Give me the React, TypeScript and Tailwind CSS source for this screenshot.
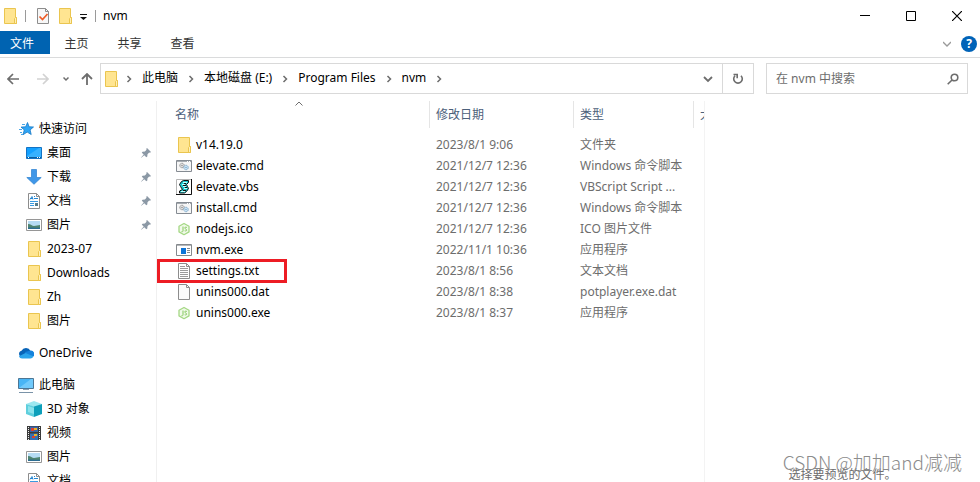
import type { ReactNode } from "react";

const icons: Record<string, ReactNode> = {
  folder: (
    <>
      <path d="M2.500.5h11v9h1v6h-12z" fill="#ffe591" stroke="#eac54f" />
      <path d="M12.500 15.500v-5l1-1h1v6z" fill="#fff0b8" stroke="#eac54f" />
    </>
  ),
  star: (
    <>
      <path
        d="M9.500 1.500l1.600 4.300 4.400.2-3.400 2.900 1.100 4.600-4-2.400-4.200 2.600 1.300-4.800L3 6.100l4.700-.3z"
        fill="#2fa5f5"
        stroke="#1878c4"
        strokeWidth=".8"
      />
      <path d="M4 3.500h3M1 8.500h3M2 11.500h2M3 13.500h2" stroke="#4aa7e8" />
    </>
  ),
  desktop: (
    <>
      <path d="M.5 2.500h15v11H.5z" fill="#12a0ff" stroke="#1373c4" />
      <path d="M1 11L13 3h2v9H1z" fill="#36b1ff" />
      <path d="M1 12.500h14" stroke="#0b5d9e" />
      <path d="M2 12.500h1M11 12.500h1M13 12.500h1" stroke="#fff" />
    </>
  ),
  download: (
    <path
      d="M5.500.5h5v8h4.700L8 15.300.8 8.500h4.700z"
      fill="#3f97e8"
      stroke="#2a7fd0"
      strokeWidth=".7"
    />
  ),
  document: (
    <>
      <path d="M2.500.5h8l3 3v12h-11z" fill="#fff" stroke="#8d8d8d" />
      <path d="M10.500.5v3h3" fill="none" stroke="#8d8d8d" />
      <path d="M4 6.500l2-3 1 3M4 5.500h3M8 3.500h1M8 5.500h4" stroke="#2787d2" fill="none" />
      <path d="M4 8.500h8M4 10.500h4M4 12.500h4" stroke="#3a9ae0" />
      <path d="M9 10h3v3H9z" fill="#557d8c" />
    </>
  ),
  picture: (
    <>
      <path d="M.5 2.500h15v11H.5z" fill="#fff" stroke="#969696" />
      <path d="M2 4h12v8H2z" fill="#b6dcf4" />
      <path d="M2 7c3 0 4 2 6 2s4-1 6-1v4H2z" fill="#4f8470" />
      <path d="M2 10.500c4 0 7 .5 12 0V12H2z" fill="#2c6d91" />
    </>
  ),
  cloud: (
    <>
      <path d="M4 12.500a3.500 3.500 0 0 1-.5-6.800A5 5 0 0 1 12.500 6L9 12.500z" fill="#0864b8" />
      <path d="M7 7l5.500-1.500a3.500 3.500 0 0 1 2.800 6L9 12z" fill="#1482dc" />
      <path d="M1 11.300L7.500 8l7.800 3.300c-.5 1.400-1.500 2.200-3 2.200H4c-1.400 0-2.500-.8-3-2.200z" fill="#2aa4ec" />
    </>
  ),
  computer: (
    <>
      <path d="M.5 1.500h15v10H.5z" fill="#48b5f5" stroke="#4d7694" />
      <path d="M1 11L13 2h2v9z" fill="#71cafb" />
      <path d="M5 12.500h6" stroke="#8aa0b2" />
      <path d="M1 15.500h14" stroke="#7a93a8" />
    </>
  ),
  cube: (
    <>
      <path d="M8 0l8 3-8 3-8-3z" fill="#9ce8f0" />
      <path d="M0 3l8 2.500V16l-8-3z" fill="#5fcfdd" />
      <path d="M16 3L8 5.500V16l8-3z" fill="#0d9fba" />
      <path d="M2 5l6 2v6l-6-2z" fill="#8be3ec" />
    </>
  ),
  film: (
    <>
      <path d="M1 1h14v14H1z" fill="#3a3a3a" />
      <path d="M4 1.500h8V7H4z" fill="#3b65a8" />
      <path d="M4 8.500h8V15H4z" fill="#3470b4" />
      <path d="M5 3h3v3H5zM6 11h3v2H6z" fill="#d9412f" />
      <path d="M8 3h3v2H8zM8 9h3v2H8z" fill="#e6b22b" />
      <path d="M2.500 2v13M13.500 2v13" stroke="#eee" strokeDasharray="1 1" />
    </>
  ),
  cmd: (
    <>
      <path d="M.5 2.500h15v11H.5z" fill="#f6f6f6" stroke="#858b92" />
      <path d="M1 3.500h14" stroke="#a6abb0" />
      <path d="M11 3.500h1M13 3.500h1" stroke="#fff" />
      <circle cx="6" cy="7.500" r="2.200" fill="#e4e4e4" stroke="#909090" strokeDasharray="1.500 .3" />
      <circle cx="6" cy="7.500" r=".8" fill="#909090" />
      <circle cx="10" cy="9.500" r="2.200" fill="#cfe7f8" stroke="#7ea9c8" strokeDasharray="1.500 .3" />
      <circle cx="10" cy="9.500" r=".8" fill="#7ea9c8" />
    </>
  ),
  vbs: (
    <>
      <path d="M.5.5h15v15H.5z" fill="#fff" stroke="#b5b5b5" />
      <path d="M15.500 0v15.500H0" fill="none" stroke="#111" />
      <path d="M5.500 2.500l2-1h5v2l-2 2 1 2 1 2-2 3-2 1.500h-5v-2l3-1.500-2-3-1-2z" fill="#19c6cc" stroke="#111" />
      <path d="M7 3.500h4M6 5.500h3M7 7.500h3M8 9.500h3M5 12.500h4" stroke="#c9ffff" />
      <path d="M10 4.500H8M7 6.500h3M9 8.500h2M7 11.500h3" stroke="#111" />
    </>
  ),
  node: (
    <>
      <path
        d="M8 2.500l5 2.800v5.600l-5 2.800-5-2.800V5.300z"
        fill="#f1faea"
        stroke="#a5d885"
        strokeWidth="1.300"
        strokeLinejoin="round"
      />
      <path
        d="M7 5.500v4.300c0 .8-.6 1.200-1.500.9M10.900 6.500c-1.800-1-3 .6-1.500 1.300 1.800.6 1.800 2.600-.7 2"
        fill="none"
        stroke="#85c95e"
      />
    </>
  ),
  exe: (
    <>
      <path d="M.5 2.500h15v11H.5z" fill="#fff" stroke="#85898d" />
      <path d="M1 3.500h14" stroke="#b4b7ba" />
      <path d="M5 6h5v6H5z" fill="#0d74d8" />
      <path d="M11 6.500h3M11 8.500h3M11 10.500h3" stroke="#85898d" />
    </>
  ),
  text: (
    <>
      <path d="M2.500.5h8l3 3v12h-11z" fill="#fff" stroke="#8d8d8d" />
      <path d="M10.500.5v3h3" fill="none" stroke="#8d8d8d" />
      <path d="M4 3.500h5M4 5.500h8M4 7.500h8M4 9.500h8M4 11.500h8M4 13.500h8" stroke="#9b9b9b" />
    </>
  ),
  blank: (
    <>
      <path d="M2.500.5h8l3 3v12h-11z" fill="#fafafa" stroke="#8d8d8d" />
      <path d="M10.500.5v3h3" fill="none" stroke="#8d8d8d" />
    </>
  ),
  check: (
    <>
      <path d="M2.500.5h8l3 3v12h-11z" fill="#f7f7f7" stroke="#8d8d8d" />
      <path d="M10.500.5v3h3" fill="none" stroke="#8d8d8d" />
      <path d="M4.500 8.500l3 3 5-5.500" fill="none" stroke="#ef5b25" strokeWidth="1.700" />
    </>
  ),
};

const Icon = ({ name }: { name: string }) => (
  <svg viewBox="0 0 16 16" className="size-4 shrink-0" aria-hidden="true">
    {icons[name]}
  </svg>
);

const Pin = () => (
  <svg viewBox="0 0 10 10" className="size-2.5 shrink-0" aria-hidden="true">
    <path d="M6 0l4 4-1 .7-.8-.2L6.500 6.200l-.2 2.300-1 .7L3.300 7.200.3 9.800l-.2-.2L2.700 6.600.8 4.700l.7-1 2.400-.2L5.500 1.800 5.300.8z" fill="#8b98a5" />
  </svg>
);

const Chevron = () => (
  <svg viewBox="0 0 26 16" className="h-4 w-[26px] shrink-0" aria-hidden="true">
    <path d="M11.500 5l3 3-3 3" fill="none" stroke="#6d6d6d" strokeWidth="1.500" />
  </svg>
);

type Place = { label: string; icon: string; pinned?: boolean };

const groups: { head: Place; items: Place[] }[] = [
  {
    head: { label: "快速访问", icon: "star" },
    items: [
      { label: "桌面", icon: "desktop", pinned: true },
      { label: "下载", icon: "download", pinned: true },
      { label: "文档", icon: "document", pinned: true },
      { label: "图片", icon: "picture", pinned: true },
      { label: "2023-07", icon: "folder" },
      { label: "Downloads", icon: "folder" },
      { label: "Zh", icon: "folder" },
      { label: "图片", icon: "folder" },
    ],
  },
  { head: { label: "OneDrive", icon: "cloud" }, items: [] },
  {
    head: { label: "此电脑", icon: "computer" },
    items: [
      { label: "3D 对象", icon: "cube" },
      { label: "视频", icon: "film" },
      { label: "图片", icon: "picture" },
      { label: "文档", icon: "document" },
    ],
  },
];

const files = [
  { name: "v14.19.0", icon: "folder", date: "2023/8/1 9:06", type: "文件夹" },
  { name: "elevate.cmd", icon: "cmd", date: "2021/12/7 12:36", type: "Windows 命令脚本" },
  { name: "elevate.vbs", icon: "vbs", date: "2021/12/7 12:36", type: "VBScript Script ..." },
  { name: "install.cmd", icon: "cmd", date: "2021/12/7 12:36", type: "Windows 命令脚本" },
  { name: "nodejs.ico", icon: "node", date: "2021/12/7 12:36", type: "ICO 图片文件" },
  { name: "nvm.exe", icon: "exe", date: "2022/11/1 10:36", type: "应用程序" },
  { name: "settings.txt", icon: "text", date: "2023/8/1 8:56", type: "文本文档", marked: true },
  { name: "unins000.dat", icon: "blank", date: "2023/8/1 8:38", type: "potplayer.exe.dat" },
  { name: "unins000.exe", icon: "node", date: "2023/8/1 8:37", type: "应用程序" },
];

const crumbs = ["此电脑", "本地磁盘 (E:)", "Program Files", "nvm"];

const TitleBar = () => (
  <header className="flex h-[31px] shrink-0 items-center">
    <div className="flex items-center pl-0.5">
      <Icon name="folder" />
      <span className="ml-[7px] h-3 w-px bg-[#9a9a9a]" />
      <button aria-label="属性" className="ml-[9px]">
        <Icon name="check" />
      </button>
      <button aria-label="新建文件夹" className="ml-1.5">
        <Icon name="folder" />
      </button>
      <button aria-label="自定义快速访问工具栏" className="ml-[7px]">
        <svg viewBox="0 0 8 8" className="size-2">
          <path d="M0 2.500h7" stroke="#111" />
          <path d="M0 5h7L3.500 8z" fill="#111" />
        </svg>
      </button>
      <span className="ml-[7px] h-3 w-px bg-[#9a9a9a]" />
      <h1 className="ml-[7px]">nvm</h1>
    </div>
    <div className="ml-auto flex">
      <button aria-label="最小化" className="flex h-[31px] w-[46px] items-center justify-center">
        <svg viewBox="0 0 10 10" className="size-2.5" stroke="#000">
          <path d="M0 4.500h10" />
        </svg>
      </button>
      <button aria-label="最大化" className="flex h-[31px] w-[46px] items-center justify-center">
        <svg viewBox="0 0 10 10" className="size-2.5" fill="none" stroke="#000">
          <path d="M.5.5h9v9h-9z" />
        </svg>
      </button>
      <button aria-label="关闭" className="flex h-[31px] w-[46px] items-center justify-center">
        <svg viewBox="0 0 10 10" className="size-2.5" stroke="#000" strokeWidth="1.200">
          <path d="M0 0l10 10M10 0L0 10" />
        </svg>
      </button>
    </div>
  </header>
);

const Ribbon = () => (
  <nav className="flex h-[27px] shrink-0 border-b border-[#dadbdc]">
    <button className="h-[23px] w-[50px] bg-[#0063b1] pt-0.5 pr-1.5 text-white">文件</button>
    {["主页", "共享", "查看"].map((tab) => (
      <button key={tab} className="h-[23px] w-[53px] pt-0.5 text-[#333]">
        {tab}
      </button>
    ))}
    <div className="ml-auto flex h-[26px] items-center gap-2.5 pr-[3px]">
      <button aria-label="展开功能区">
        <svg viewBox="0 0 8 6" className="h-1.5 w-2" fill="none" stroke="#9a9a9a" strokeWidth="1.300">
          <path d="M0 1l4 4 4-4" />
        </svg>
      </button>
      <button
        aria-label="帮助"
        className="flex size-4 items-center justify-center rounded-full bg-[#0063b8] font-bold text-white"
      >
        ?
      </button>
    </div>
  </nav>
);

const AddressBar = () => (
  <div className="flex shrink-0 items-center pt-[5px] pr-3">
    <div className="flex w-[100px] shrink-0 items-center pl-[7px] text-[#6d6d6d]">
      <button aria-label="后退">
        <svg viewBox="0 0 12 12" className="size-3" fill="none" stroke="currentColor" strokeWidth="1.700">
          <path d="M12 6H1M6 1L1 6l5 5" />
        </svg>
      </button>
      <button aria-label="前进" className="ml-[18px] text-[#d2d2d2]">
        <svg viewBox="0 0 12 12" className="size-3" fill="none" stroke="currentColor" strokeWidth="1.700">
          <path d="M0 6h11M6 1l5 5-5 5" />
        </svg>
      </button>
      <button aria-label="最近浏览的位置" className="ml-3.5">
        <svg viewBox="0 0 6 6" className="size-1.5" fill="none" stroke="currentColor" strokeWidth="1.500">
          <path d="M.5 1.500L3 4l2.500-2.500" />
        </svg>
      </button>
      <button aria-label="上移" className="ml-3">
        <svg viewBox="0 0 12 12" className="size-3" fill="none" stroke="currentColor" strokeWidth="1.800">
          <path d="M6 12V1M1 6l5-5 5 5" />
        </svg>
      </button>
    </div>
    <div className="flex h-[31px] min-w-0 flex-1 items-center border border-[#d9d9d9] pl-0.5">
      <Icon name="folder" />
      <ol className="-ml-[3px] flex min-w-0 items-center overflow-hidden whitespace-nowrap">
        <li>
          <Chevron />
        </li>
        {crumbs.map((crumb) => (
          <li key={crumb} className="flex items-center">
            <button className="pb-0.5">{crumb}</button>
            <Chevron />
          </li>
        ))}
      </ol>
      <button aria-label="以前的位置" className="ml-auto px-[9px]">
        <svg viewBox="0 0 10 8" className="h-2 w-2.5" fill="none" stroke="#6d6d6d" strokeWidth="1.800">
          <path d="M1 2l4 4 4-4" />
        </svg>
      </button>
      <button
        aria-label="刷新"
        className="flex h-full w-[31px] items-center justify-center border-l border-[#d9d9d9]"
      >
        <svg viewBox="0 0 12 12" className="size-3" fill="none" stroke="#6d6d6d" strokeWidth="1.600">
          <path d="M9 2.700a4.300 4.300 0 1 1-6 0M1.500 1.500h3.700v3.700" />
        </svg>
      </button>
    </div>
    <label className="ml-3 flex h-[31px] w-[202px] shrink-0 items-center border border-[#d9d9d9] pr-2 pl-[9px]">
      <input
        type="text"
        aria-label="搜索"
        placeholder="在 nvm 中搜索"
        className="min-w-0 flex-1 outline-none placeholder:text-[#6d6d6d]"
      />
      <svg viewBox="0 0 12 12" className="size-3" fill="none" stroke="#6d6d6d" strokeWidth="1.600">
        <circle cx="7.500" cy="4.500" r="3.300" />
        <path d="M5 7L.7 11.300" />
      </svg>
    </label>
  </div>
);

const Sidebar = () => (
  <nav className="flex w-[157px] shrink-0 flex-col gap-2 overflow-hidden border-r border-[#f0f0f0] pt-4">
    {groups.map(({ head, items }) => (
      <section key={head.label}>
        <a href="#" className="flex h-6 items-center gap-[5px] pl-[18px]">
          <Icon name={head.icon} />
          {head.label}
        </a>
        {items.map((item, i) => (
          <a key={i} href="#" className="flex h-6 items-center gap-[5px] pr-[5px] pl-[26px]">
            <Icon name={item.icon} />
            <span className="flex-1">{item.label}</span>
            {item.pinned && <Pin />}
          </a>
        ))}
      </section>
    ))}
  </nav>
);

const FileList = () => (
  <main className="min-w-0 flex-1 overflow-hidden">
    <table className="w-[616px] table-fixed border-collapse text-left whitespace-nowrap">
      <colgroup>
        <col className="w-[272px]" />
        <col className="w-[144px]" />
        <col className="w-[120px]" />
        <col className="w-20" />
      </colgroup>
      <thead className="text-[#4c607a]">
        <tr className="h-[33px] align-top">
          <th className="relative p-0 font-normal">
            <div className="h-[27px] pl-[18px] leading-[27px]">名称</div>
            <svg
              viewBox="0 0 8 5"
              className="absolute top-0 left-[138px] h-[5px] w-2"
              fill="none"
              stroke="#6d6d6d"
            >
              <path d="M.5 4.500L4 1l3.500 3.500" />
            </svg>
          </th>
          {["修改日期", "类型", "大小"].map((title) => (
            <th key={title} className="p-0 font-normal">
              <div className="h-[27px] border-l border-[#e5e5e5] pl-1.5 leading-[27px]">
                {title}
              </div>
            </th>
          ))}
        </tr>
      </thead>
      <tbody className="text-[#6d6d6d]">
        {files.map((file) => (
          <tr key={file.name} className="h-[21px]">
            <td className="relative p-0">
              {file.marked && (
                <span className="absolute -top-px left-0 h-6 w-[130px] border-3 border-[#ed1c24]" />
              )}
              <a href="#" className="flex h-[21px] items-center gap-1 pl-[19px] text-black">
                <Icon name={file.icon} />
                {file.name}
              </a>
            </td>
            <td className="p-0 pl-[7px]">{file.date}</td>
            <td className="p-0 pl-[7px]">{file.type}</td>
            <td className="p-0"></td>
          </tr>
        ))}
      </tbody>
    </table>
  </main>
);

const Preview = () => (
  <aside className="relative flex w-[276px] shrink-0 flex-col justify-end border-l border-[#f3f3f3] text-center text-[#6d6d6d]">
    <p className="h-[15px] px-4 leading-4">选择要预览的文件。</p>
    <p className="absolute right-[18px] bottom-1.5 font-['Noto_Sans_CJK_SC',sans-serif] text-[19px] leading-7 font-light whitespace-nowrap text-[#8c8c8c]">
      CSDN @加加and减减
    </p>
  </aside>
);

export default function App() {
  return (
    <div className="flex h-screen flex-col overflow-hidden bg-white font-['Noto_Sans','Noto_Sans_CJK_SC',sans-serif] text-xs text-black">
      <TitleBar />
      <Ribbon />
      <AddressBar />
      <div className="flex min-h-0 flex-1 pt-[7px]">
        <Sidebar />
        <FileList />
        <Preview />
      </div>
    </div>
  );
}
